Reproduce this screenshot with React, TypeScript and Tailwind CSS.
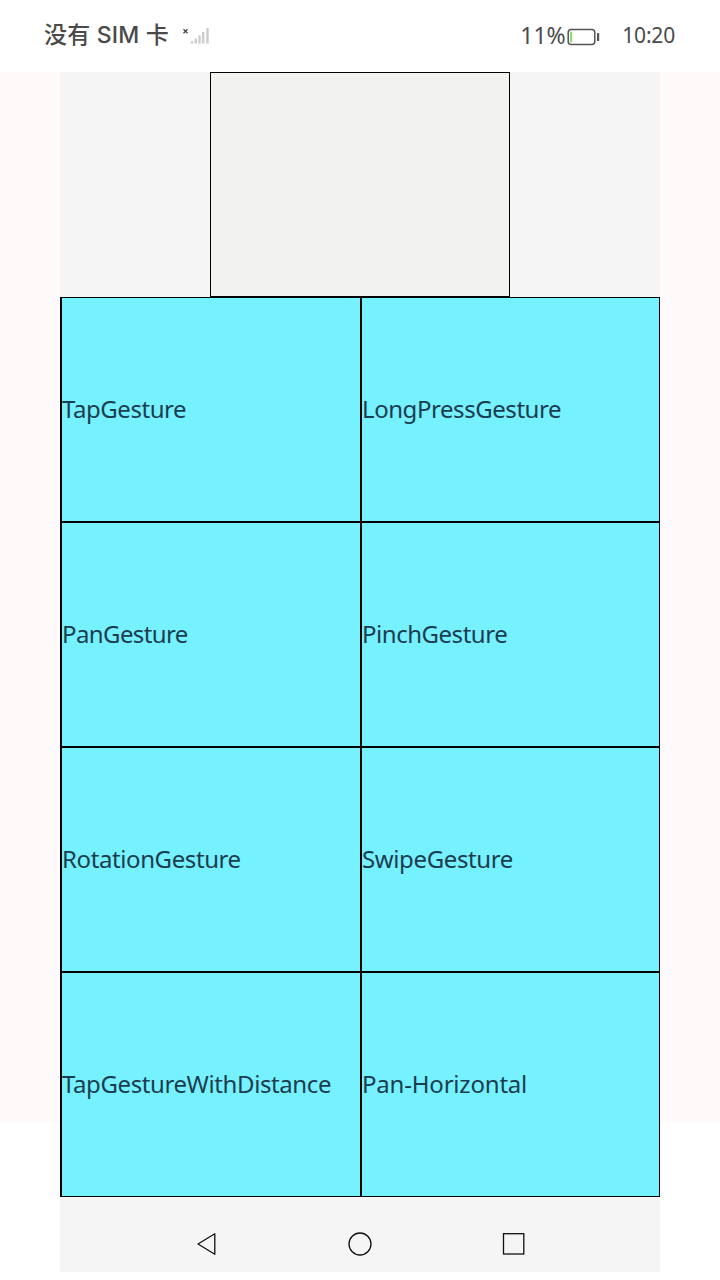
const rows = [
  [
    { label: 'TapGesture', spacing: 'tracking-[-0.45px]' },
    { label: 'LongPressGesture', spacing: 'tracking-[-0.44px]' },
  ],
  [
    { label: 'PanGesture', spacing: 'tracking-[-0.6px]' },
    { label: 'PinchGesture', spacing: 'tracking-[-0.47px]' },
  ],
  [
    { label: 'RotationGesture', spacing: 'tracking-[-0.4px]' },
    { label: 'SwipeGesture', spacing: 'tracking-[-0.38px]' },
  ],
  [
    { label: 'TapGestureWithDistance', spacing: 'tracking-[-0.4px]' },
    { label: 'Pan-Horizontal', spacing: 'tracking-[-0.2px]' },
  ],
];

function SignalIcon() {
  return (
    <svg width="28" height="20" viewBox="0 0 28 20" className="shrink-0">
      <path d="M1.5 3.2l4 4M5.5 3.2l-4 4" stroke="#444" strokeWidth="1.3" />
      <path d="M10 15v2.5M13.8 12.5v5M17.5 9.5v8M21.2 6v11.5M25.5 2v15.5" stroke="#ccc" strokeWidth="2.4" />
    </svg>
  );
}

function BatteryIcon() {
  return (
    <svg width="33" height="18" viewBox="0 0 33 18" className="mt-0.5 shrink-0">
      <rect x="1.2" y="1.4" width="26.6" height="15" rx="3" fill="none" stroke="#555" strokeWidth="1.5" />
      <rect x="3" y="3.5" width="2.2" height="11" rx="0.8" fill="#8fdc78" />
      <rect x="30" y="5" width="2.2" height="8" rx="0.6" fill="#555" />
    </svg>
  );
}

export default function App() {
  return (
    <div className="flex h-[1280px] w-[720px] flex-col bg-white font-['Noto_Sans','Noto_Sans_CJK_SC',sans-serif]">
      <header className="flex h-[72px] shrink-0 items-center justify-between pr-[45px] pl-11 text-[#4a4a4a]">
        <div className="flex items-center">
          <span className="w-[138px] pb-px font-['Inter','Noto_Sans_CJK_SC',sans-serif] text-[23px] font-medium tracking-[0.2px] whitespace-nowrap">
            没有 SIM 卡
          </span>
          <SignalIcon />
        </div>
        <div className="flex items-center pb-px">
          <span className="w-[47px] text-[23px]">11%</span>
          <BatteryIcon />
          <span className="ml-[22px] text-[21px] tracking-[-0.2px]">10:20</span>
        </div>
      </header>
      <div className="flex h-[1200px] items-start">
        <div className="h-[1050px] w-[60px] bg-[#fffafa]" />
        <main className="flex h-full w-[600px] flex-col items-center bg-[#f5f5f5]">
          <div className="h-[225px] w-[300px] shrink-0 border border-black bg-[#f2f2f0]" />
          <div className="grid w-full shrink-0 grid-cols-2">
            {rows.flat().map(({ label, spacing }) => (
              <div
                key={label}
                className="flex h-[225px] items-center border-y border-l-2 border-black bg-[#76f1ff] pb-0.5 even:border-r"
              >
                <span className={`text-2xl whitespace-nowrap text-[#1b3d4f] ${spacing}`}>{label}</span>
              </div>
            ))}
          </div>
          <nav className="flex w-full grow items-center">
            <svg width="600" height="75" viewBox="0 0 600 75" fill="none" stroke="#111" strokeWidth="1.3">
              <path d="M154.8 36.8v20.5L138 47z" strokeLinejoin="round" />
              <circle cx="300" cy="47" r="11" />
              <rect x="443.5" y="36.7" width="20.3" height="20.3" />
            </svg>
          </nav>
        </main>
        <div className="h-[1050px] w-[60px] bg-[#fffafa]" />
      </div>
    </div>
  );
}
